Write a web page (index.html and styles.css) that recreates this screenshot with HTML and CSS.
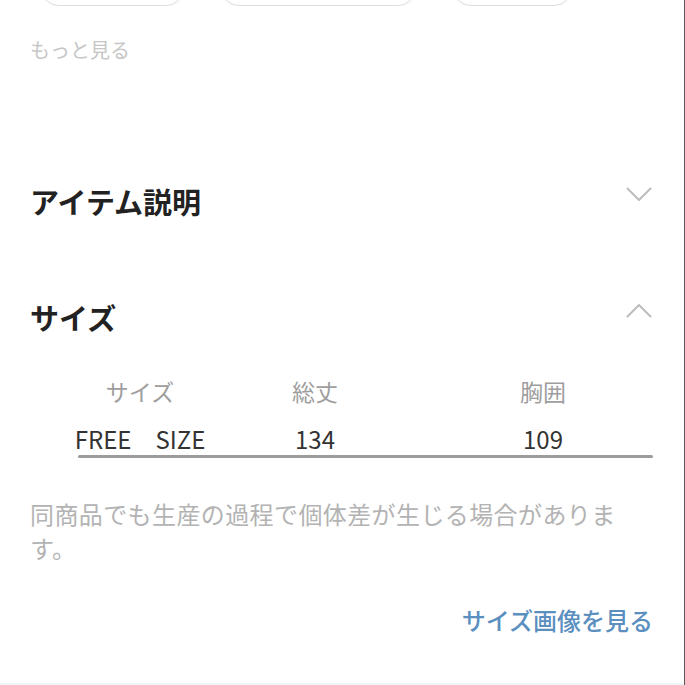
FILE: index.html
```html
<!DOCTYPE html>
<html lang="ja">
<head>
<meta charset="utf-8">
<link rel="stylesheet" href="styles.css">
</head>
<body>
<div class="page">
  <div class="pills">
    <div class="pill p1"></div>
    <div class="pill p2"></div>
    <div class="pill p3"></div>
  </div>
  <div class="more">もっと見る</div>

  <div class="section-head first">
    <h2 class="title">アイテム説明</h2>
    <svg class="chev" width="26" height="15" viewBox="0 0 26 15"><polyline points="1.5,1.5 13,13 24.5,1.5" fill="none" stroke="#bdbdbd" stroke-width="2" stroke-linecap="round" stroke-linejoin="round"/></svg>
  </div>

  <div class="section-head second">
    <h2 class="title">サイズ</h2>
    <svg class="chev" width="26" height="15" viewBox="0 0 26 15"><polyline points="1.5,13.5 13,2 24.5,13.5" fill="none" stroke="#bdbdbd" stroke-width="2" stroke-linecap="round" stroke-linejoin="round"/></svg>
  </div>

  <div class="size-table">
    <div class="row head">
      <div class="cell">サイズ</div>
      <div class="cell">総丈</div>
      <div class="cell">胸囲</div>
    </div>
    <div class="row data">
      <div class="cell">FREE　SIZE</div>
      <div class="cell">134</div>
      <div class="cell">109</div>
    </div>
  </div>
  <div class="rule"></div>

  <p class="note">同商品でも生産の過程で個体差が生じる場合があります。</p>

  <div class="link-row"><span class="link">サイズ画像を見る</span></div>
  <div class="bottom-line"></div>
</div>
</body>
</html>
```

FILE: styles.css
```css
html, body {
  margin: 0;
  padding: 0;
  background: #ffffff;
}
body {
  font-family: "Noto Sans CJK JP", "Noto Sans", sans-serif;
  overflow: hidden;
}
.page {
  width: 684px;
  height: 685px;
  border-right: 1px solid #5a5a5a;
  box-sizing: content-box;
  display: flex;
  flex-direction: column;
  overflow: hidden;
}
.pills {
  height: 6px;
  overflow: hidden;
  display: flex;
  align-items: flex-end;
  padding-left: 40px;
  gap: 35px;
  flex-shrink: 0;
}
.pill {
  height: 40px;
  border: 1px solid #dedede;
  border-radius: 20px;
  box-sizing: border-box;
  box-shadow: 0 1px 2px rgba(0,0,0,0.04);
}
.p1 { width: 145px; }
.p2 { width: 197px; }
.p3 { width: 121px; }
.more {
  margin-top: 31px;
  margin-left: 30px;
  font-size: 20px;
  line-height: 26px;
  color: #c6c6c6;
}
.section-head {
  display: flex;
  justify-content: space-between;
  align-items: flex-start;
  padding: 0 32px 0 30px;
  height: 40px;
}
.section-head.first { margin-top: 118px; }
.section-head.second { margin-top: 76px; }
.title {
  margin: 0;
  font-size: 29px;
  line-height: 40px;
  font-weight: 700;
  color: #222222;
}
.chev {
  margin-top: 6px;
  display: block;
}
.size-table {
  margin-top: 39px;
  margin-left: 65px;
  display: flex;
  flex-direction: column;
  gap: 17px;
}
.row {
  display: grid;
  grid-template-columns: 150px 200px 256px;
}
.cell {
  text-align: center;
  white-space: nowrap;
}
.row.head .cell {
  font-size: 23px;
  line-height: 30px;
  color: #9e9e9e;
}
.row.data .cell {
  font-size: 24px;
  line-height: 32px;
  color: #333333;
}
.rule {
  margin-left: 78px;
  width: 575px;
  height: 3px;
  border-radius: 2px;
  background: #9c9c9c;
}
.note {
  margin: 39px 0 0 30px;
  width: 600px;
  font-size: 24px;
  line-height: 34px;
  letter-spacing: 0.4px;
  color: #b3b3b3;
}
.link-row {
  margin-top: 38px;
  padding-right: 31px;
  display: flex;
  justify-content: flex-end;
}
.link {
  font-size: 24px;
  line-height: 34px;
  color: #5a8fc0;
  font-weight: 500;
}
.bottom-line {
  margin-top: auto;
  height: 2px;
  background: #eef5f9;
}
```
